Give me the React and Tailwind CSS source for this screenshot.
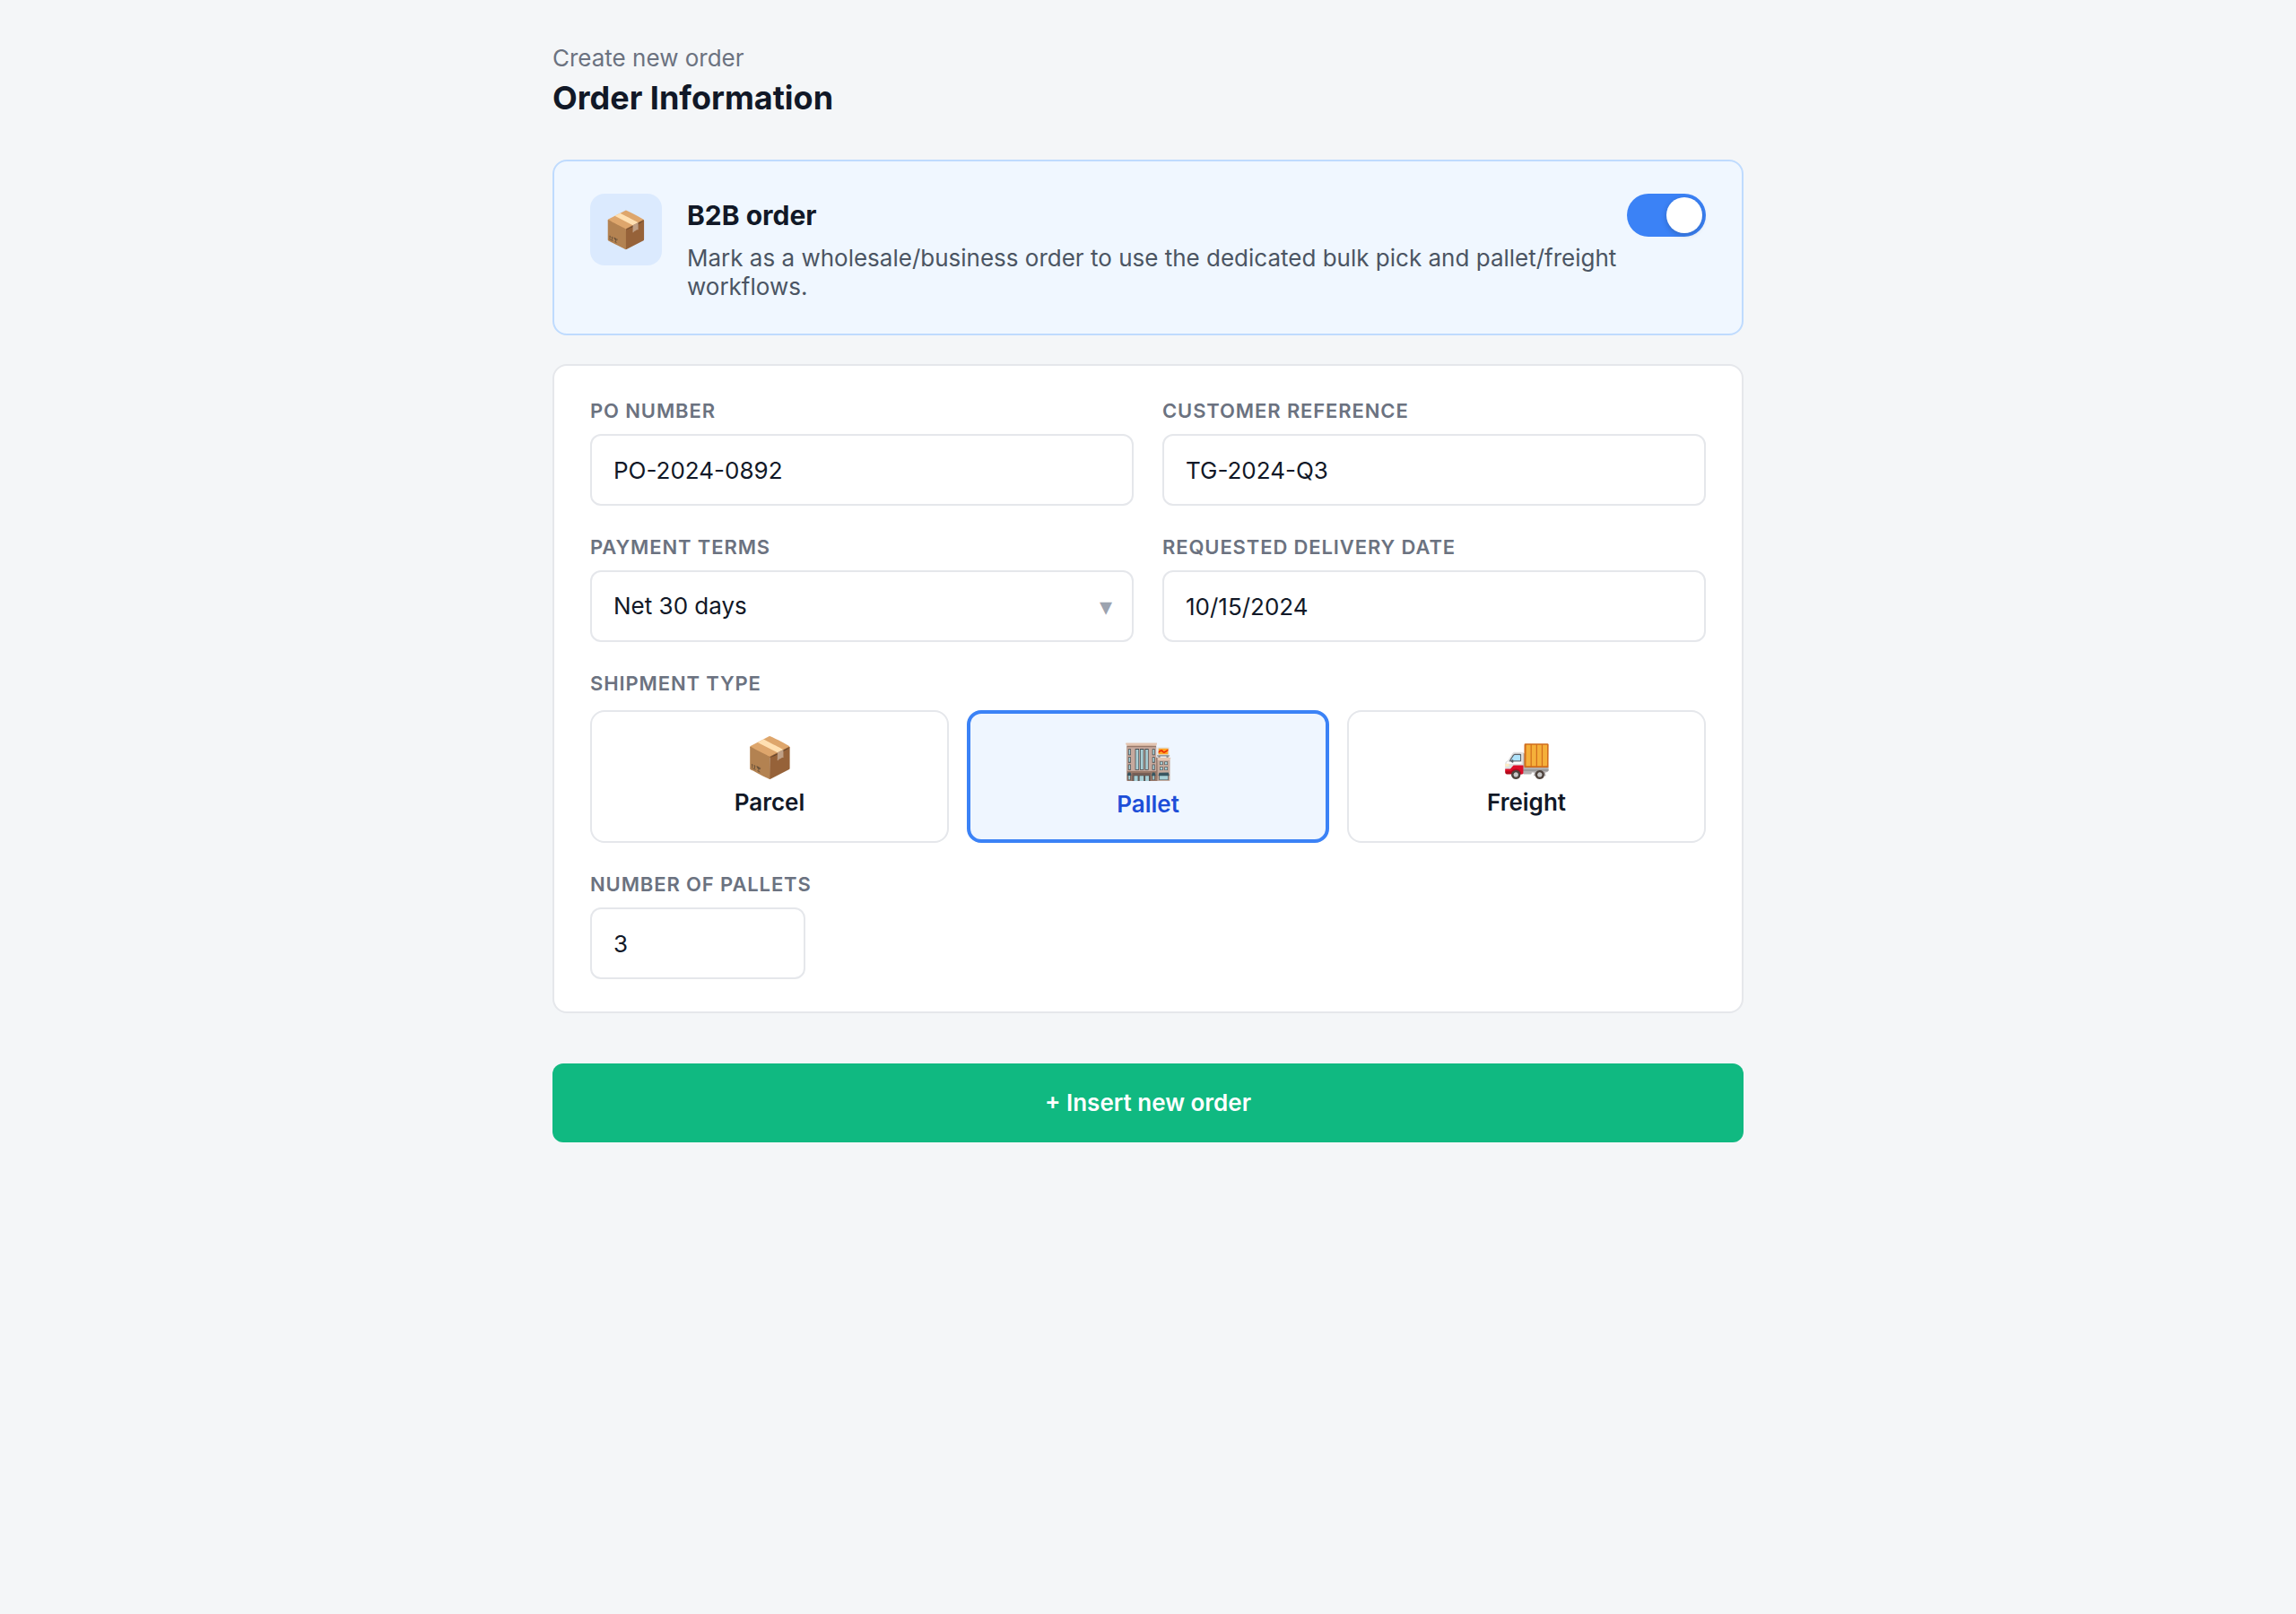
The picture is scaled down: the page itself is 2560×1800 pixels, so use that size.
import { useId, useState } from "react";

const labelClass =
  "block text-[22px] leading-[28px] font-semibold tracking-[0.04em] uppercase text-[#6b7280]";
const controlClass =
  "block h-20 w-full appearance-none rounded-xl border-2 border-[#e5e7eb] bg-white px-6 text-[26px] leading-8 text-[#111827] outline-none focus-visible:border-[#3b82f6]";

const SHIPMENT_TYPES = [
  { id: "parcel", name: "Parcel", icon: "📦" },
  { id: "pallet", name: "Pallet", icon: "🏬" },
  { id: "freight", name: "Freight", icon: "🚚" },
];

function TextField({ label, value, inputMode }) {
  const id = useId();
  return (
    <div>
      <label htmlFor={id} className={labelClass}>
        {label}
      </label>
      <input
        id={id}
        type="text"
        inputMode={inputMode}
        defaultValue={value}
        className={`${controlClass} mt-3`}
      />
    </div>
  );
}

function SelectField({ label, options }) {
  const id = useId();
  return (
    <div>
      <label htmlFor={id} className={labelClass}>
        {label}
      </label>
      <div className="relative mt-3">
        <select id={id} className={controlClass}>
          {options.map((option) => (
            <option key={option}>{option}</option>
          ))}
        </select>
        <span
          aria-hidden="true"
          className="pointer-events-none absolute inset-y-0 right-6 flex items-center text-[28px] text-[#9ca3af]"
        >
          ▾
        </span>
      </div>
    </div>
  );
}

function ShipmentOption({ type, selected, onSelect }) {
  return (
    <label
      className={`flex flex-1 cursor-pointer flex-col items-center gap-2 rounded-2xl px-6 pt-6 pb-[22px] ${
        selected
          ? "border-4 border-[#3b82f6] bg-[#eff6ff] text-[#1d4ed8]"
          : "border-2 border-[#e5e7eb] bg-white text-[#111827]"
      }`}
    >
      <input
        type="radio"
        name="shipment-type"
        value={type.id}
        checked={selected}
        onChange={() => onSelect(type.id)}
        className="sr-only"
      />
      <span aria-hidden="true" className="text-[44px] leading-[52px]">
        {type.icon}
      </span>
      <span className="text-[26px] leading-[34px] font-semibold">{type.name}</span>
    </label>
  );
}

function B2BCard() {
  const [enabled, setEnabled] = useState(true);
  return (
    <section className="flex items-start gap-7 rounded-2xl border-2 border-[#bfdbfe] bg-[#f0f7ff] px-10 py-9">
      <div
        aria-hidden="true"
        className="flex size-20 shrink-0 items-center justify-center rounded-2xl bg-[#dbeafe] text-[40px] leading-[48px]"
      >
        📦
      </div>
      <div className="flex-1">
        <div className="flex items-center justify-between">
          <h2 id="b2b-title" className="text-[30px] leading-[38px] font-bold text-[#111827]">
            B2B order
          </h2>
          <label className="relative h-12 w-22 shrink-0 cursor-pointer">
            <input
              type="checkbox"
              role="switch"
              aria-labelledby="b2b-title"
              checked={enabled}
              onChange={(event) => setEnabled(event.target.checked)}
              className="peer sr-only"
            />
            <span className="flex h-12 w-22 items-center rounded-full bg-[#d1d5db] p-1 peer-checked:justify-end peer-checked:bg-[#3b82f6]">
              <span className="size-10 rounded-full bg-white shadow-[0_2px_6px_rgba(0,0,0,0.2)]" />
            </span>
          </label>
        </div>
        <p className="mt-2 text-[26px] leading-8 text-[#4b5563]">
          Mark as a wholesale/business order to use the dedicated bulk pick and pallet/freight
          workflows.
        </p>
      </div>
    </section>
  );
}

export default function App() {
  const [shipment, setShipment] = useState("pallet");
  return (
    <div className="min-h-screen bg-[#f4f6f8] font-['Inter',sans-serif] text-[#111827]">
      <main className="mx-auto max-w-[1440px] px-14 py-12">
        <header>
          <p className="text-[26px] leading-[34px] text-[#6b7280]">Create new order</p>
          <h1 className="mt-1.5 text-[36px] leading-[42px] font-bold">Order Information</h1>
        </header>

        <form className="mt-12" onSubmit={(event) => event.preventDefault()}>
          <B2BCard />

          <section className="mt-8 flex flex-col gap-8 rounded-2xl border-2 border-[#e5e7eb] bg-white px-10 py-9">
            <div className="grid grid-cols-2 gap-8">
              <TextField label="PO number" value="PO-2024-0892" />
              <TextField label="Customer reference" value="TG-2024-Q3" />
              <SelectField
                label="Payment terms"
                options={["Net 30 days", "Net 60 days", "Due on receipt"]}
              />
              <TextField label="Requested delivery date" value="10/15/2024" />
            </div>

            <fieldset>
              <legend className={labelClass}>Shipment type</legend>
              <div className="mt-4 flex gap-5">
                {SHIPMENT_TYPES.map((type) => (
                  <ShipmentOption
                    key={type.id}
                    type={type}
                    selected={type.id === shipment}
                    onSelect={setShipment}
                  />
                ))}
              </div>
            </fieldset>

            <div className="w-60 whitespace-nowrap">
              <TextField label="Number of pallets" value="3" inputMode="numeric" />
            </div>
          </section>

          <button
            type="submit"
            className="mt-14 h-22 w-full cursor-pointer rounded-xl bg-[#10b981] text-[26px] leading-8 font-semibold text-white"
          >
            + Insert new order
          </button>
        </form>
      </main>
    </div>
  );
}
